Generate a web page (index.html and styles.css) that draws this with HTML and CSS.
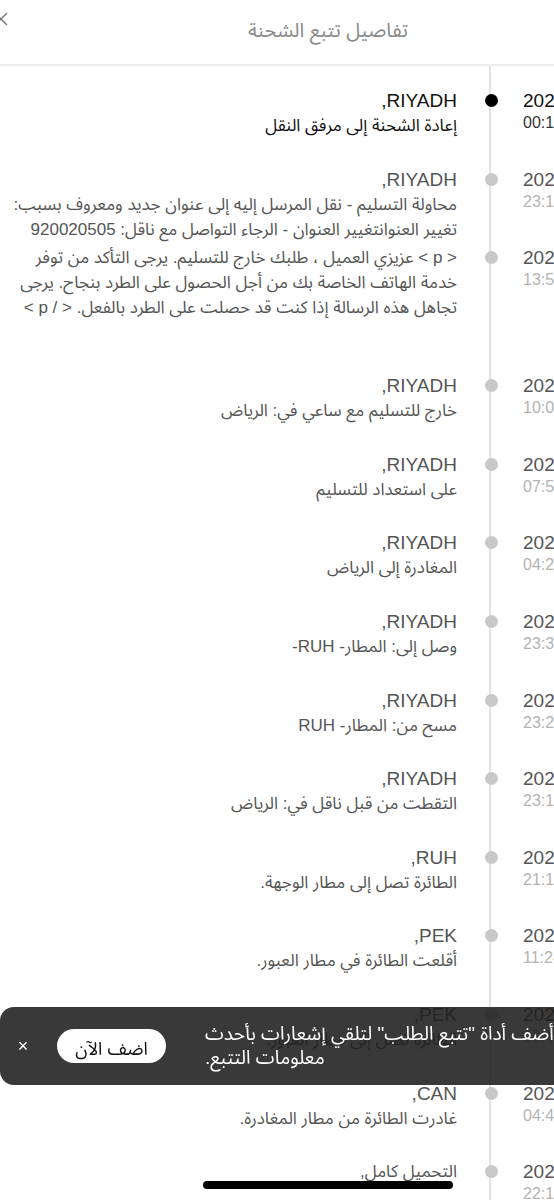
FILE: index.html
```html
<!DOCTYPE html>
<html lang="ar">
<head>
  <meta charset="UTF-8">
  <title>تفاصيل تتبع الشحنة</title>
  <link rel="stylesheet" href="styles.css">
</head>
<body>
  <div class="screen">
    <header class="topbar">
      <button class="close-btn" aria-label="إغلاق">
        <svg width="14" height="14" viewBox="0 0 14 14"><path d="M1 1L13 13M13 1L1 13" stroke="#777" stroke-width="1.4" fill="none"/></svg>
      </button>
      <h1 class="title">تفاصيل تتبع الشحنة</h1>
    </header>

    <ul class="timeline">
      <li class="event current">
        <div class="when"><div class="date">2023-06-14</div><div class="time">00:12</div></div>
        <span class="dot"></span>
        <div class="info"><div class="place">RIYADH,</div><div class="desc">إعادة الشحنة إلى مرفق النقل</div></div>
      </li>
      <li class="event">
        <div class="when"><div class="date">2023-06-13</div><div class="time">23:14</div></div>
        <span class="dot"></span>
        <div class="info"><div class="place">RIYADH,</div><div class="desc">محاولة التسليم - نقل المرسل إليه إلى عنوان جديد ومعروف بسبب:</div><div class="desc">تغيير العنوانتغيير العنوان - الرجاء التواصل مع ناقل: 920020505</div></div>
      </li>
      <li class="event tall">
        <div class="when"><div class="date">2023-06-13</div><div class="time">13:52</div></div>
        <span class="dot"></span>
        <div class="info"><div class="desc">&lt; p &gt; عزيزي العميل ، طلبك خارج للتسليم. يرجى التأكد من توفر</div><div class="desc">خدمة الهاتف الخاصة بك من أجل الحصول على الطرد بنجاح. يرجى</div><div class="desc">تجاهل هذه الرسالة إذا كنت قد حصلت على الطرد بالفعل. &lt; / p &gt;</div></div>
      </li>
      <li class="event">
        <div class="when"><div class="date">2023-06-13</div><div class="time">10:04</div></div>
        <span class="dot"></span>
        <div class="info"><div class="place">RIYADH,</div><div class="desc">خارج للتسليم مع ساعي في: الرياض</div></div>
      </li>
      <li class="event">
        <div class="when"><div class="date">2023-06-13</div><div class="time">07:51</div></div>
        <span class="dot"></span>
        <div class="info"><div class="place">RIYADH,</div><div class="desc">على استعداد للتسليم</div></div>
      </li>
      <li class="event">
        <div class="when"><div class="date">2023-06-13</div><div class="time">04:26</div></div>
        <span class="dot"></span>
        <div class="info"><div class="place">RIYADH,</div><div class="desc">المغادرة إلى الرياض</div></div>
      </li>
      <li class="event">
        <div class="when"><div class="date">2023-06-12</div><div class="time">23:38</div></div>
        <span class="dot"></span>
        <div class="info"><div class="place">RIYADH,</div><div class="desc">وصل إلى: المطار- RUH-</div></div>
      </li>
      <li class="event">
        <div class="when"><div class="date">2023-06-12</div><div class="time">23:27</div></div>
        <span class="dot"></span>
        <div class="info"><div class="place">RIYADH,</div><div class="desc">مسح من: المطار- RUH</div></div>
      </li>
      <li class="event">
        <div class="when"><div class="date">2023-06-12</div><div class="time">23:10</div></div>
        <span class="dot"></span>
        <div class="info"><div class="place">RIYADH,</div><div class="desc">التقطت من قبل ناقل في: الرياض</div></div>
      </li>
      <li class="event">
        <div class="when"><div class="date">2023-06-12</div><div class="time">21:15</div></div>
        <span class="dot"></span>
        <div class="info"><div class="place">RUH,</div><div class="desc">الطائرة تصل إلى مطار الوجهة.</div></div>
      </li>
      <li class="event">
        <div class="when"><div class="date">2023-06-12</div><div class="time">11:24</div></div>
        <span class="dot"></span>
        <div class="info"><div class="place">PEK,</div><div class="desc">أقلعت الطائرة في مطار العبور.</div></div>
      </li>
      <li class="event">
        <div class="when"><div class="date">2023-06-12</div><div class="time">08:40</div></div>
        <span class="dot"></span>
        <div class="info"><div class="place">PEK,</div><div class="desc">الطائرة تصل إلى مطار العبور.</div></div>
      </li>
      <li class="event">
        <div class="when"><div class="date">2023-06-12</div><div class="time">04:45</div></div>
        <span class="dot"></span>
        <div class="info"><div class="place">CAN,</div><div class="desc">غادرت الطائرة من مطار المغادرة.</div></div>
      </li>
      <li class="event">
        <div class="when"><div class="date">2023-06-11</div><div class="time">22:18</div></div>
        <span class="dot"></span>
        <div class="info"><div class="desc">التحميل كامل,</div></div>
      </li>
    </ul>
  </div>

  <div class="toast">
    <button class="toast-close" aria-label="إغلاق">&times;</button>
    <button class="toast-btn">اضف الآن</button>
    <div class="toast-text">أضف أداة "تتبع الطلب" لتلقي إشعارات بأحدث<br>معلومات التتبع.</div>
  </div>
  <div class="home-bar"></div>
</body>
</html>
```

FILE: styles.css
```css
html, body {
  margin: 0;
  height: 100%;
  overflow: hidden;
  background: #fff;
}
body {
  font-family: "Liberation Sans", "Noto Sans Arabic", "DejaVu Sans", sans-serif;
  color: #555;
}
button {
  font-family: inherit;
  cursor: pointer;
}
.screen {
  width: 656px;
}

/* header */
.topbar {
  display: grid;
  grid-template-columns: 40px 1fr 40px;
  align-items: start;
  height: 64px;
  border-bottom: 2px solid #ececec;
}
.close-btn {
  border: 0;
  background: none;
  padding: 0;
  margin: 12px 0 0 -6px;
  width: 14px;
  height: 14px;
  display: flex;
}
.title {
  margin: 18px 0 0;
  text-align: center;
  font-size: 20px;
  line-height: 24px;
  font-weight: normal;
  color: #8a8a8a;
}

/* timeline */
.timeline {
  list-style: none;
  margin: 0;
  padding: 22px 0 0;
  direction: rtl;
  background: linear-gradient(#e3e3e3, #e3e3e3) 489px 0 / 2px 100% no-repeat;
}
.event {
  display: grid;
  grid-template-columns: 133px 64px 1fr;
  min-height: 78.6px;
}
.event.tall {
  min-height: 128px;
}
.when {
  direction: ltr;
  text-align: left;
}
.date {
  font-size: 19px;
  line-height: 25px;
  color: #555;
}
.time {
  font-size: 16px;
  line-height: 20px;
  color: #b3b3b3;
}
.dot {
  justify-self: center;
  width: 13px;
  height: 13px;
  margin-top: 6px;
  border-radius: 50%;
  background: #c8c8c8;
}
.info {
  padding-right: 2px;
  line-height: 25px;
  color: #555;
  white-space: nowrap;
}
.place {
  font-size: 19px;
}
.desc {
  font-size: 17px;
}
.current .info,
.current .date {
  color: #111;
}
.current .time {
  color: #333;
}
.current .dot {
  background: #000;
}

/* banner over the list */
.toast {
  position: fixed;
  left: 0;
  top: 1007px;
  width: 700px;
  height: 78px;
  box-sizing: border-box;
  padding-left: 17px;
  border-radius: 14px;
  background: rgba(30, 30, 30, 0.88);
  display: flex;
  align-items: center;
  color: #fff;
}
.toast-close {
  width: 12px;
  padding: 0;
  border: 0;
  background: none;
  color: #fff;
  font-size: 18px;
}
.toast-btn {
  margin-left: 28px;
  width: 109px;
  height: 34px;
  border: 0;
  border-radius: 17px;
  background: #fff;
  color: #111;
  font-size: 18px;
}
.toast-text {
  margin-left: 39px;
  direction: rtl;
  text-align: left;
  font-size: 19px;
  line-height: 24px;
  white-space: nowrap;
}
.home-bar {
  position: fixed;
  left: 203px;
  top: 1181px;
  width: 250px;
  height: 8px;
  border-radius: 4px;
  background: #000;
}
```
